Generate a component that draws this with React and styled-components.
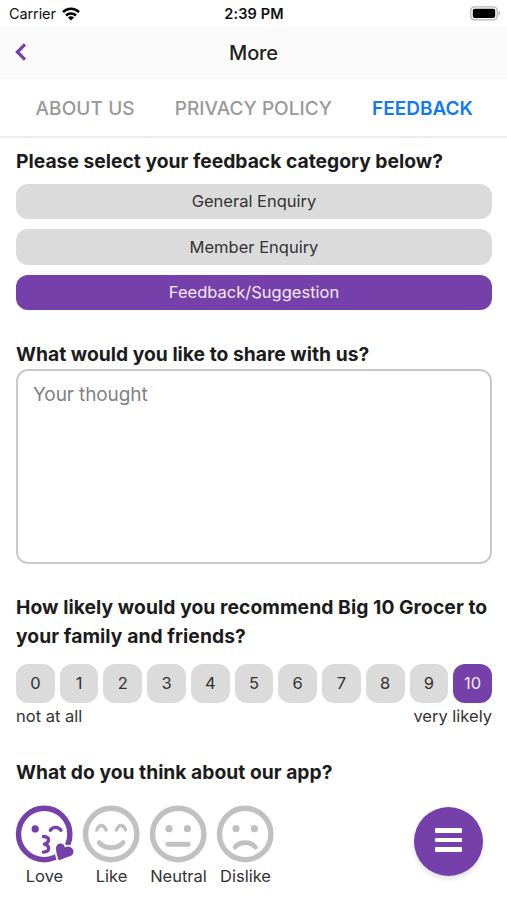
import React, { useState } from "react";
import styled, { createGlobalStyle } from "styled-components";

const tabs = [
  { label: "ABOUT US", spacing: "0.1px" },
  { label: "PRIVACY POLICY", spacing: "0.05px" },
  { label: "FEEDBACK", spacing: "0" },
];

const categories = ["General Enquiry", "Member Enquiry", "Feedback/Suggestion"];

const scores = [0, 1, 2, 3, 4, 5, 6, 7, 8, 9, 10];

const Face = ({ children }) => (
  <svg
    width="60"
    height="60"
    viewBox="0.8 0 60 60"
    fill="none"
    stroke="currentColor"
    strokeLinecap="round"
    strokeLinejoin="round"
  >
    <circle cx="30" cy="30" r="25.7" strokeWidth="5.4" />
    {children}
  </svg>
);

const Eyes = () => (
  <g fill="currentColor" stroke="none">
    <circle cx="20.8" cy="24.7" r="3.6" />
    <circle cx="39.2" cy="24.7" r="3.6" />
  </g>
);

const heart =
  "M44.2 55.4C42.9 51.5 41.8 47.4 41.8 44.4C41.8 41.5 43.8 39.6 46.2 39.6C48.6 39.6 50.2 41 50.8 43.4C52.2 42.6 53.6 42.4 55 42.7C57.8 43.2 59.6 45.6 59.2 48.2C58.9 50.4 57.6 51.6 55.6 52.3C51.8 53.8 48 54.9 45.4 56.1C44.8 56.3 44.4 56 44.2 55.4Z";

const LoveFace = () => (
  <Face>
    <circle cx="21" cy="24.9" r="3.6" fill="currentColor" stroke="none" />
    <path d="M36.2 26.2C38.6 22.4 44.2 22.4 46.6 26.2" strokeWidth="3.4" />
    <path
      d="M29.2 32.5C32.6 32.6 34.4 34.2 34.4 36.1C34.4 38.2 32.4 39.4 30.2 40.2C32.6 40.8 34.4 42.3 34.4 44.2C34.4 46.4 32.2 48 29.2 48.2"
      strokeWidth="3.3"
    />
    <path d={heart} fill="#fff" stroke="#fff" strokeWidth="3.6" />
    <path d={heart} fill="currentColor" stroke="none" />
  </Face>
);

const LikeFace = () => (
  <Face>
    <path
      d="M15.6 26C17.8 20 22.6 20 24.8 26M35.2 26C37.4 20 42.2 20 44.4 26"
      strokeWidth="3.4"
    />
    <path d="M18 38.6C24 45.4 36 45.4 42 38.6" strokeWidth="4.8" />
  </Face>
);

const NeutralFace = () => (
  <Face>
    <Eyes />
    <path d="M19.8 40.2H40.2" strokeWidth="4.9" />
  </Face>
);

const DislikeFace = () => (
  <Face>
    <Eyes />
    <path d="M19.9 43.2C24.4 37.1 35.6 37.1 40.1 43.2" strokeWidth="4.7" />
  </Face>
);

const moods = [
  { label: "Love", Icon: LoveFace },
  { label: "Like", Icon: LikeFace },
  { label: "Neutral", Icon: NeutralFace },
  { label: "Dislike", Icon: DislikeFace },
];

const App = () => {
  const [tab, setTab] = useState("FEEDBACK");
  const [category, setCategory] = useState("Feedback/Suggestion");
  const [score, setScore] = useState(10);
  const [mood, setMood] = useState("Love");

  return (
    <Screen>
      <GlobalStyle />
      <StatusBar>
        <Carrier>
          Carrier
          <svg width="18" height="14" viewBox="0 0 18 14">
            <g fill="none" stroke="#000" strokeWidth="2.5">
              <path d="M1 5.1a11.4 11.4 0 0 1 16 0" />
              <path d="M4 8.5a7.2 7.2 0 0 1 10 0" />
            </g>
            <path d="M9 13.6 5.9 10.5a4.4 4.4 0 0 1 6.2 0z" />
          </svg>
        </Carrier>
        <Time>2:39 PM</Time>
        <Battery>
          <svg width="31" height="15" viewBox="0 0 31 15">
            <rect x="0.8" y="0.8" width="26.4" height="13" rx="3.6" fill="#fff" stroke="#b4b4b4" strokeWidth="1.3" />
            <rect x="2.8" y="2.7" width="22.4" height="9.2" rx="1.8" />
            <path d="M28.6 5v4.6c1.1-.4 1.6-1.2 1.6-2.3s-.5-1.9-1.6-2.3z" fill="#b4b4b4" />
          </svg>
        </Battery>
      </StatusBar>

      <Header>
        <BackButton aria-label="Back">
          <svg width="13" height="20" viewBox="0 0 13 20">
            <path d="M11 1.4 3.4 9l7.6 7.6" fill="none" stroke="#7540a9" strokeWidth="3.2" />
          </svg>
        </BackButton>
        <Title>More</Title>
      </Header>

      <Tabs>
        {tabs.map(({ label, spacing }) => (
          <Tab
            key={label}
            $active={label === tab}
            $spacing={spacing}
            onClick={() => setTab(label)}
          >
            {label}
          </Tab>
        ))}
      </Tabs>

      <Content>
        <Question>Please select your feedback category below?</Question>
        <CategoryList>
          {categories.map((name) => (
            <Category
              key={name}
              $active={name === category}
              onClick={() => setCategory(name)}
            >
              {name}
            </Category>
          ))}
        </CategoryList>

        <Question $top="30px">What would you like to share with us?</Question>
        <Thought placeholder="Your thought" />

        <Question $top="29px" $spacing="0.06px">
          How likely would you recommend Big 10 Grocer to
          <br />
          your family and friends?
        </Question>
        <Scores>
          {scores.map((n) => (
            <Score key={n} $active={n === score} onClick={() => setScore(n)}>
              {n}
            </Score>
          ))}
        </Scores>
        <ScoreLegend>
          <span>not at all</span>
          <span>very likely</span>
        </ScoreLegend>

        <Question $top="30px">What do you think about our app?</Question>
        <Moods>
          {moods.map(({ label, Icon }) => (
            <Mood
              key={label}
              $active={label === mood}
              onClick={() => setMood(label)}
            >
              <Icon />
              <MoodLabel>{label}</MoodLabel>
            </Mood>
          ))}
        </Moods>
      </Content>

      <MenuButton aria-label="Menu">
        <MenuLine />
        <MenuLine />
        <MenuLine />
      </MenuButton>
    </Screen>
  );
};

const GlobalStyle = createGlobalStyle`
  * {
    box-sizing: border-box;
  }

  body {
    margin: 0;
    background-color: #fff;
    overflow: hidden;
  }

  button,
  textarea {
    font-family: inherit;
    border: none;
    padding: 0;
    background: none;
  }
`;

const Screen = styled.div`
  position: relative;
  width: 507px;
  height: 900px;
  overflow: hidden;
  background-color: #fff;
  color: #333;
  font-family: Inter, "Liberation Sans", sans-serif;
`;

const StatusBar = styled.div`
  display: grid;
  grid-template-columns: 1fr auto 1fr;
  align-items: center;
  height: 26px;
  padding: 1px 6px 0 9px;
  color: #111;
  font-size: 14.5px;
`;

const Carrier = styled.div`
  display: flex;
  align-items: center;
  gap: 6px;
  letter-spacing: -0.1px;
`;

const Time = styled.span`
  margin-right: 2px;
  font-weight: 600;
  letter-spacing: 0.15px;
`;

const Battery = styled.div`
  display: flex;
  justify-content: flex-end;
`;

const Header = styled.header`
  display: grid;
  grid-template-columns: 1fr auto 1fr;
  align-items: center;
  height: 53px;
  padding: 0 14px;
  background-color: #fafafa;
`;

const BackButton = styled.button`
  display: flex;
  justify-self: start;
`;

const Title = styled.h1`
  margin: 0;
  color: #222;
  font-size: 20px;
  font-weight: 450;
  letter-spacing: -0.15px;
`;

const Tabs = styled.nav`
  display: flex;
  align-items: center;
  gap: 40px;
  height: 59px;
  padding: 1px 0 0 35.5px;
  border-bottom: 2px solid #ededed;
`;

const Tab = styled.button`
  color: ${(props) => (props.$active ? "#0f7af5" : "#999")};
  font-size: 19px;
  font-weight: ${(props) => (props.$active ? 600 : 500)};
  letter-spacing: ${(props) => props.$spacing};
  white-space: nowrap;
`;

const Content = styled.main`
  padding: 9px 15px 0 16px;
`;

const Question = styled.h2`
  margin: ${(props) => props.$top || 0} 0 0;
  color: #1c1c1c;
  font-size: 19.3px;
  font-weight: 650;
  line-height: 29px;
  letter-spacing: ${(props) => props.$spacing || 0};
  white-space: nowrap;
`;

const CategoryList = styled.div`
  display: flex;
  flex-direction: column;
  gap: 10px;
  margin-top: 8px;
`;

const Category = styled.button`
  height: 35.3px;
  padding-bottom: 0.6px;
  border-radius: 12px;
  background-color: ${(props) => (props.$active ? "#7540a9" : "#dbdbdb")};
  color: ${(props) => (props.$active ? "#f6e9ff" : "#333")};
  font-size: 16.5px;
`;

const Thought = styled.textarea`
  display: block;
  width: 100%;
  height: 195px;
  padding: 12px 15px;
  border: 2px solid #c9c9c9;
  border-radius: 12px;
  font-size: 19px;
  letter-spacing: -0.1px;
  resize: none;
  outline: none;

  &::placeholder {
    color: #808285;
  }
`;

const Scores = styled.div`
  display: grid;
  grid-template-columns: repeat(11, 1fr);
  gap: 5px;
  margin-top: 13px;
`;

const Score = styled.button`
  height: 39px;
  padding-bottom: 1px;
  border-radius: 12px;
  background-color: ${(props) => (props.$active ? "#7540a9" : "#dbdbdb")};
  color: ${(props) => (props.$active ? "#f6e9ff" : "#333")};
  font-size: 16.5px;
`;

const ScoreLegend = styled.div`
  display: flex;
  justify-content: space-between;
  margin-top: 1px;
  font-size: 16.5px;
  line-height: 24px;
`;

const Moods = styled.div`
  display: flex;
  margin: 17px 0 0 -5px;
`;

const Mood = styled.button`
  display: flex;
  flex-direction: column;
  align-items: center;
  width: 67px;
  color: ${(props) => (props.$active ? "#7540a9" : "#c1c1c1")};
`;

const MoodLabel = styled.span`
  color: #333;
  font-size: 16.5px;
  line-height: 24px;
`;

const MenuButton = styled.button`
  position: absolute;
  right: 24px;
  bottom: 24px;
  display: flex;
  flex-direction: column;
  align-items: center;
  justify-content: center;
  gap: 5px;
  width: 69px;
  height: 69px;
  padding-bottom: 3px;
  border-radius: 50%;
  background-color: #7540a9;
  box-shadow: 0 3px 5px rgba(0, 0, 0, 0.12);
`;

const MenuLine = styled.span`
  width: 27px;
  height: 4.6px;
  border-radius: 1px;
  background-color: #fff;
`;

export default App;
